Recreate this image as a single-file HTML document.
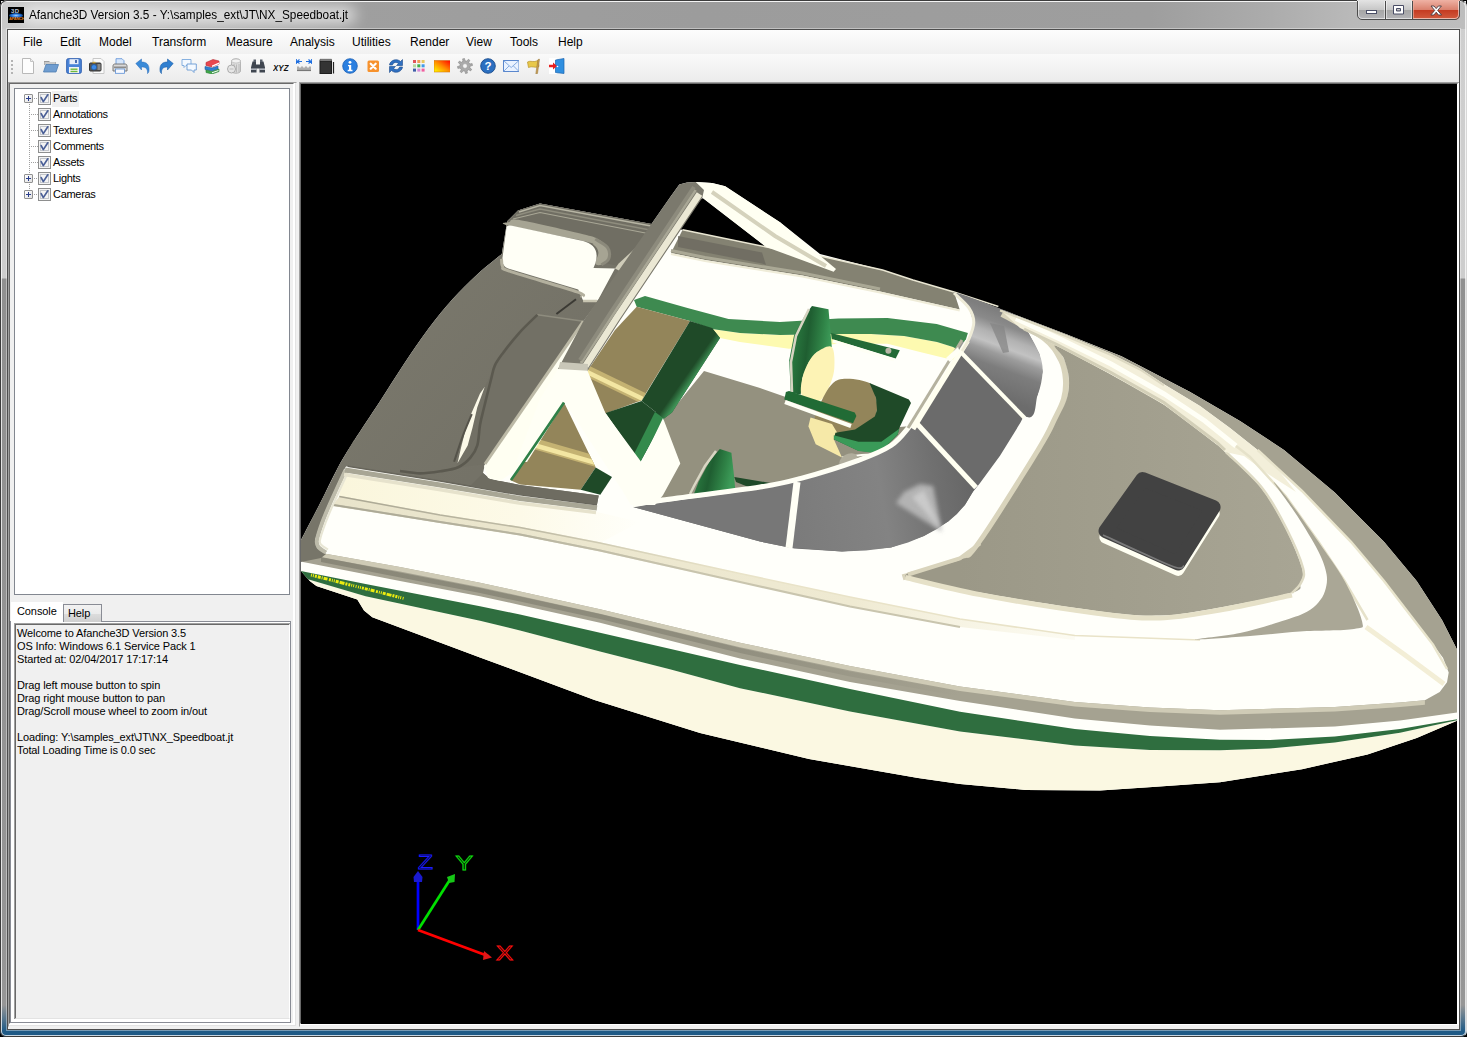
<!DOCTYPE html>
<html><head><meta charset="utf-8"><title>Afanche3D Version 3.5</title>
<style>
*{box-sizing:border-box;margin:0;padding:0}
html,body{width:1467px;height:1037px;overflow:hidden;background:#000}
body{position:relative;font-family:"Liberation Sans",sans-serif;font-size:12px;color:#000}
.abs{position:absolute}
#frame{left:0;top:0;width:1467px;height:1037px;border-radius:7px 7px 6px 6px;overflow:hidden;
 background:linear-gradient(180deg,#cfcfcf 0,#cdcdcd 278px,#909090 279px,#969696 1005px,#1f5a86 1031px,#1f5a86 1037px)}
#frameedge{left:0;top:0;width:1467px;height:1037px;border-radius:7px 7px 6px 6px;border:1px solid #3c3c3c;border-right-color:#d8d8d8}
#frameedge2{left:1px;top:1px;width:1465px;height:1035px;border-radius:6px 6px 5px 5px;border:1px solid rgba(255,255,255,.75);border-top-color:transparent}
#titlebar{left:1px;top:1px;width:1465px;height:28px;
 background:linear-gradient(90deg,#cacaca 0,#bdbdbd 120px,#9f9f9f 350px,#9c9c9c 700px,#9e9e9e 1150px,#acacac 1270px,#b9b9b9 1350px,#bdbdbd 1465px);border-top:1px solid #f4f4f4}
#titleshade{left:1px;top:20px;width:1465px;height:9px;background:linear-gradient(180deg,rgba(255,255,255,0),rgba(255,255,255,.18))}
#titleglow{left:22px;top:6px;width:334px;height:18px;border-radius:9px;background:rgba(255,255,255,.62);filter:blur(7px)}
#title{left:29px;top:8px;font-size:12px;white-space:nowrap;transform-origin:0 0;transform:scaleX(.981)}
#appicon{left:8px;top:7px;width:16px;height:16px;background:#000;overflow:hidden}
#clientedge{left:7px;top:29px;width:1453px;height:1001px;border:1px solid #4e4e4e;background:#fff;box-shadow:0 0 0 1px rgba(255,255,255,.38)}
#client{left:8px;top:30px;width:1451px;height:999px;background:#f0f0f0;overflow:hidden}
#menubar{left:0;top:0;width:1451px;height:24px;background:linear-gradient(180deg,#fdfdfd,#f1f1f1)}
.mi{top:5px;white-space:nowrap;transform-origin:0 0;font-size:12px;line-height:14px}
#toolbar{left:0;top:24px;width:1451px;height:28px;background:linear-gradient(180deg,#fafafa,#ececec)}
.ti{top:4px;width:16px;height:16px}

#lpanel{left:0;top:52px;width:287px;height:943px;background:#f0f0f0;border-style:solid;border-width:2px;border-color:#696969 #fff #fff #696969;box-shadow:inset 0 0 0 0 #000}
#lpanel:before{content:"";position:absolute;left:-2px;top:-2px;width:287px;height:943px;border-style:solid;border-width:1px;border-color:#a0a0a0 transparent transparent #a0a0a0;pointer-events:none}
#lpanel:after{content:"";position:absolute;left:-1px;top:-1px;width:285px;height:941px;border-style:solid;border-width:1px;border-color:transparent #e3e3e3 #e3e3e3 transparent;pointer-events:none}
#tree{left:4px;top:4px;width:276px;height:507px;border:1px solid #828790;background:#fff;font-size:11px}
.row{left:0;width:270px;height:16px}
.plus{left:9px;top:3px;width:9px;height:9px;border:1px solid #919191;background:linear-gradient(135deg,#fff,#e0e0e0);border-radius:1px}
.ph{left:1px;top:3px;width:5px;height:1px;background:#2b3f8c}
.pv{left:3px;top:1px;width:1px;height:5px;background:#2b3f8c}
.dot{top:7px;height:1px;background:repeating-linear-gradient(90deg,#a0a0a0 0 1px,transparent 1px 2px)}
.vdot{left:14px;top:15px;width:1px;height:92px;background:repeating-linear-gradient(180deg,#a0a0a0 0 1px,transparent 1px 2px)}
.cb{left:23px;top:1px;width:13px;height:13px;border:1px solid #8e8f8f;background:#f4f4f4;box-shadow:inset 0 0 0 1px #f4f4f4, inset 0 0 0 2px #c3c6cb}
.cb svg{left:0;top:0}
.tl{left:37px;top:0;height:16px;line-height:15px;padding:0 1px;white-space:nowrap;letter-spacing:-0.3px}
.tl.sel{background:#f0f0f0;padding-right:2px}
#tabpage{left:0;top:537px;width:281px;height:402px;border:1px solid #898c95;background:#fff}
#tab1{left:1px;top:518px;width:52px;height:21px;background:#fff;font-size:11px;line-height:18px;padding-left:6px;letter-spacing:-0.1px}
#tab2{left:53px;top:520px;width:39px;height:18px;border:1px solid #898c95;border-bottom:none;background:linear-gradient(180deg,#f2f2f2 0,#ebebeb 50%,#dddddd 51%,#cfcfcf 100%);font-size:11px;line-height:16px;padding-left:4px;letter-spacing:-0.1px}
#console{left:4px;top:539px;width:276px;height:396px;border-style:solid;border-width:2px 1px 1px 2px;border-color:#696969 #fff #e3e3e3 #696969;background:#f0f0f0;font-size:11px}
#console:before{content:"";position:absolute;left:-2px;top:-2px;width:274px;height:394px;border-style:solid;border-width:1px;border-color:#a0a0a0 transparent transparent #a0a0a0}
#ctext{position:absolute;left:1px;top:2px;line-height:13px;white-space:nowrap;letter-spacing:-0.12px}
#vpedge{left:291px;top:52px;width:1160px;height:943px;background:#000;border-style:solid;border-width:2px 2px 2px 2px;border-color:#696969 #fff #fff #696969}
#vpedge:before{content:"";position:absolute;left:-2px;top:-2px;width:1160px;height:943px;border-style:solid;border-width:1px;border-color:#a0a0a0 transparent transparent #a0a0a0}
</style></head><body>
<div id="frame" class="abs"></div>
<div id="titlebar" class="abs"></div>
<div id="titleglow" class="abs"></div>
<div id="frameedge" class="abs"></div><div id="frameedge2" class="abs"></div>
<div id="appicon" class="abs"><i class="abs" style="left:1px;top:6px;width:14px;height:5px;border-radius:50%;background:radial-gradient(ellipse at center,#9fd0ff 0,#1f6fd8 45%,rgba(10,30,90,0) 100%)"></i><b class="abs" style="left:3px;top:1px;font-size:6px;line-height:6px;color:#b9c6dc;font-weight:bold;letter-spacing:.3px">3D</b><b class="abs" style="left:1px;top:10px;font-size:4px;line-height:4px;color:#e8801c;font-weight:bold;letter-spacing:-.2px">AFANCHE</b></div>
<div id="title" class="abs">Afanche3D Version 3.5 - Y:\samples_ext\JT\NX_Speedboat.jt</div>
<svg class="abs" style="left:1354px;top:0" width="110" height="24" viewBox="1354 0 110 24">
<defs>
<linearGradient id="wbG" x1="0" y1="0" x2="0" y2="1"><stop offset="0" stop-color="#e4e4e4"/><stop offset=".48" stop-color="#c6c6c6"/><stop offset=".5" stop-color="#a6a6a6"/><stop offset="1" stop-color="#b8b8bc"/></linearGradient>
<linearGradient id="wbR" x1="0" y1="0" x2="0" y2="1"><stop offset="0" stop-color="#efb2a4"/><stop offset=".48" stop-color="#d97f6c"/><stop offset=".5" stop-color="#c53c22"/><stop offset=".85" stop-color="#d0563a"/><stop offset="1" stop-color="#e08c6a"/></linearGradient>
<clipPath id="wbC"><path d="M1357 0h103v15a5 5 0 0 1-5 5h-93a5 5 0 0 1-5-5z"/></clipPath>
</defs>
<g clip-path="url(#wbC)">
<rect x="1357" y="0" width="55" height="21" fill="url(#wbG)"/>
<rect x="1412" y="0" width="48" height="21" fill="url(#wbR)"/>
</g>
<path d="M1357.500 1v14a4.500 4.500 0 0 0 4.500 4.500h93a4.500 4.500 0 0 0 4.500-4.500V1" fill="none" stroke="#4b4b4b" stroke-width="1"/>
<path d="M1358.500 1v14a3.500 3.500 0 0 0 3.500 3.500h93a3.500 3.500 0 0 0 3.500-3.500V1" fill="none" stroke="#fff" stroke-opacity=".55" stroke-width="1"/>
<path d="M1385.500 1v19M1412.500 1v19" stroke="#4b4b4b" stroke-width="1"/>
<path d="M1386.500 1v18M1384.500 1v18M1411.500 1v18" stroke="#fff" stroke-opacity=".5" stroke-width="1"/>
<path d="M1413.500 1v18" stroke="#f0b0a0" stroke-opacity=".6" stroke-width="1"/>
<rect x="1366.500" y="10.500" width="10" height="3" fill="#fff" stroke="#4a4e66" stroke-width="1"/>
<path d="M1393.500 5.500h10v8.500h-10zM1396.500 8.500h4v2.500h-4z" fill="#fff" fill-rule="evenodd" stroke="#4a4e66" stroke-width="1"/>
<path d="M1431 5.500h3l2.200 2.600 2.200-2.600h3l-3.700 4.400 3.900 4.600h-3.100l-2.300-2.800-2.300 2.800h-3.100l3.900-4.600z" fill="#fff" stroke="#4a3a40" stroke-width=".9" transform="translate(0 .5)"/>
</svg>

<div id="clientedge" class="abs"></div>
<div id="client" class="abs">
<div id="menubar" class="abs">
<span class="mi abs" style="left:15px">File</span>
<span class="mi abs" style="left:52px">Edit</span>
<span class="mi abs" style="left:91px">Model</span>
<span class="mi abs" style="left:144px">Transform</span>
<span class="mi abs" style="left:218px">Measure</span>
<span class="mi abs" style="left:282px">Analysis</span>
<span class="mi abs" style="left:344px">Utilities</span>
<span class="mi abs" style="left:402px">Render</span>
<span class="mi abs" style="left:458px">View</span>
<span class="mi abs" style="left:502px">Tools</span>
<span class="mi abs" style="left:550px">Help</span>
</div>
<div id="toolbar" class="abs">
<i class="abs" style="left:3px;top:6px;width:2px;height:15px;background:repeating-linear-gradient(180deg,#b4b4b4 0 2px,transparent 2px 4px)"></i><svg class="abs ti" style="left:12px" viewBox="0 0 16 16"><path d="M2.5 .5h8l3 3v12h-11z" fill="#fdfdfd" stroke="#b9b9b9"/><path d="M10.5 .5v3h3" fill="#eee" stroke="#c4c4c4"/></svg><svg class="abs ti" style="left:35px" viewBox="0 0 16 16"><path d="M1 3h5l1 1h6v3H1z" fill="#9a9a9a"/><path d="M1.5 4h11v3h-11z" fill="#c9c9c9"/><path d="M.5 14L3 6.5h12.5L13 14z" fill="#6f9dd0" stroke="#4e7db3" stroke-width=".8"/></svg><svg class="abs ti" style="left:58px" viewBox="0 0 16 16"><rect x=".7" y=".7" width="14.6" height="14.6" rx="1.5" fill="#4a84d8" stroke="#2f5fb0"/><rect x="3.5" y="1.2" width="9" height="5" fill="#e9eef8"/><rect x="9" y="2" width="2" height="3" fill="#4a6fb0"/><rect x="3" y="9" width="10" height="6" fill="#f4f4f4"/><rect x="4.5" y="10.5" width="7" height="1.4" fill="#6fba3c"/><rect x="4.5" y="12.8" width="7" height="1.4" fill="#6fba3c"/></svg><svg class="abs ti" style="left:81px" viewBox="0 0 16 16"><path d="M4 .5h8l3 3v12H4z" fill="#fbfbfb" stroke="#c8c8c8"/><rect x=".5" y="5" width="11.5" height="8" rx="1" fill="#555" stroke="#333"/><circle cx="5" cy="9.2" r="2.7" fill="#3c8ae8" stroke="#245a9c" stroke-width=".8"/><rect x="8.5" y="6" width="3" height="6" fill="#8a8a8a"/><rect x="3.5" y="3.8" width="3" height="1.5" fill="#c9a23a"/></svg><svg class="abs ti" style="left:104px" viewBox="0 0 16 16"><path d="M4 .7h6l2 2v5H4z" fill="#d6e6fb" stroke="#5b8fd6" stroke-width=".8"/><path d="M1 8c0-1.5 1-2 2-2h10c1 0 2 .5 2 2v5H1z" fill="#d9d9d9" stroke="#6e6e6e" stroke-width=".9"/><rect x="3.5" y="11" width="9" height="4.3" fill="#f6f9ff" stroke="#5b8fd6" stroke-width=".8"/><rect x="2" y="8.5" width="12" height="1.6" fill="#8c8c8c"/></svg><svg class="abs ti" style="left:127px" viewBox="0 0 16 16"><path d="M.8 5.5L6.5 1v3c5 0 8 2.500 7.500 8.500 0 1.500-1 3-1.500 3 .5-4-1.500-7-6-6.500v3z" fill="#3a8ad8" stroke="#2a6ab8" stroke-width=".5"/></svg><svg class="abs ti" style="left:150px" viewBox="0 0 16 16"><path d="M15.200 5.500L9.500 1v3c-5 0-8 2.500-7.500 8.500 0 1.500 1 3 1.500 3-.5-4 1.500-7 6-6.500v3z" fill="#2f7fd0" stroke="#1f5fa8" stroke-width=".6"/></svg><svg class="abs ti" style="left:173px" viewBox="0 0 16 16"><path d="M1 1.500h9v6H5l-2 2v-2H1z" fill="#f4f9ff" stroke="#7aa8dc" stroke-width=".9"/><path d="M6 6h9.300v6H13v2.500L10.500 12H6z" fill="#f4f9ff" stroke="#6a9ad4" stroke-width=".9"/></svg><svg class="abs ti" style="left:196px" viewBox="0 0 16 16"><path d="M2 4.500L9 1.500l6 1.500v3L8 9 2 7.500z" fill="#e8474f" stroke="#b52a32" stroke-width=".6"/><path d="M8 9l7-3v-1.500L8 7.500z" fill="#fff"/><path d="M1 8.500l7 1.500 6-2v3L8 13 1 11.500z" fill="#2f7fd0" stroke="#1f5a9c" stroke-width=".6"/><path d="M2 12l6 1.500 7-2.500v2.500L8 16l-6-1.500z" fill="#3faa4a" stroke="#2a7a34" stroke-width=".6"/><path d="M8 14.300l6.500-2.300v1L8 15.300z" fill="#fff"/></svg><svg class="abs ti" style="left:219px" viewBox="0 0 16 16"><path d="M4.500 3c0-3 9-3 9 0v10c0 3-9 3-9 0z" fill="#dcdcdc" stroke="#a8a8a8" stroke-width=".8"/><ellipse cx="9" cy="3" rx="4.500" ry="2" fill="#f2f2f2" stroke="#b0b0b0" stroke-width=".6"/><path d="M7 6v8M9.500 6.500v8M12 6v8" stroke="#b4b4b4" stroke-width=".9"/><circle cx="4.500" cy="11" r="4" fill="#e6e6e6" stroke="#9c9c9c" stroke-width=".8"/><path d="M2.500 11h4" stroke="#bbb"/></svg><svg class="abs ti" style="left:242px" viewBox="0 0 16 16"><path d="M2.500 3.500h3.500v3h4v-3h3.500l1.500 6v5h-5.500v-4h-3v4H1v-5z" fill="#3f4650"/><rect x="3.500" y="1.500" width="2.500" height="2.500" fill="#59616c"/><rect x="10" y="1.500" width="2.500" height="2.500" fill="#59616c"/><rect x="1" y="10.500" width="5.500" height="1.300" fill="#c9ced6"/><rect x="9.500" y="10.500" width="5.500" height="1.300" fill="#c9ced6"/></svg><svg class="abs ti" style="left:265px" viewBox="0 0 16 16"><text x="0" y="12.500" font-family="Liberation Sans,sans-serif" font-size="9.500" font-weight="bold" font-style="italic" fill="#111" textLength="15.500" lengthAdjust="spacingAndGlyphs">XYZ</text></svg><svg class="abs ti" style="left:288px" viewBox="0 0 16 16"><path d="M1 3.500h5M10 3.500h5M.300 1v5M15.700 1v5M3.500 1.500L1 3.500l2.500 2M12.500 1.500l2.500 2-2.500 2" fill="none" stroke="#1f6fe0" stroke-width="1.100"/><path d="M1 12.500h14" stroke="#777" stroke-width="1.200"/><path d="M2 8.500v3.500M4 9.500v2.500M6 8.500v3.500M8 9.500v2.500M10 8.500v3.500M12 9.500v2.500M14 8.500v3.500" stroke="#666" stroke-width="1"/></svg><svg class="abs ti" style="left:311px" viewBox="0 0 16 16"><rect x="1" y="3" width="11.500" height="12.500" fill="#333" stroke="#1d1d1d"/><path d="M1 3V1.300h11.500V3" fill="#777" stroke="#555" stroke-width=".7"/><path d="M14.500 4v11.500" stroke="#222" stroke-width="1.200"/></svg><svg class="abs ti" style="left:334px" viewBox="0 0 16 16"><circle cx="8" cy="8" r="7.300" fill="#2a7fe0" stroke="#1c5fb4" stroke-width=".8"/><circle cx="8" cy="4.300" r="1.400" fill="#fff"/><path d="M6 7h3.200v4.800h1.300v1.400H5.700v-1.400H7V8.300H6z" fill="#fff"/></svg><svg class="abs ti" style="left:357px" viewBox="0 0 16 16"><rect x="2.500" y="2.500" width="11.500" height="11.500" rx="1.500" fill="#f7922d"/><path d="M5.700 5.700l5 5M10.700 5.700l-5 5" stroke="#fff" stroke-width="2.200" stroke-linecap="round"/></svg><svg class="abs ti" style="left:380px" viewBox="0 0 16 16"><path d="M1.500 7C2 2 9 0 12.500 3.500L14.500 1.500v6H8.500l2-2C8 3.500 5 4.500 4.500 7z" fill="#2f6fc0" stroke="#1b4a8c" stroke-width=".6"/><path d="M14.500 9C14 14 7 16 3.500 12.500L1.500 14.500v-6h6l-2 2C8 12.500 11 11.500 11.500 9z" fill="#2f6fc0" stroke="#1b4a8c" stroke-width=".6"/></svg><svg class="abs ti" style="left:403px" viewBox="0 0 16 16"><rect x="2.0" y="2.0" width="3" height="3" fill="#e0525a"/><rect x="6.3" y="2.0" width="3" height="3" fill="#f09a55"/><rect x="10.6" y="2.0" width="3" height="3" fill="#e8c860"/><rect x="2.0" y="6.3" width="3" height="3" fill="#b8d8a0"/><rect x="6.3" y="6.3" width="3" height="3" fill="#3fae4a"/><rect x="10.6" y="6.3" width="3" height="3" fill="#3f9ae8"/><rect x="2.0" y="10.6" width="3" height="3" fill="#3f5fa8"/><rect x="6.3" y="10.6" width="3" height="3" fill="#d88ad8"/><rect x="10.6" y="10.6" width="3" height="3" fill="#f060a0"/></svg><svg class="abs ti" style="left:426px" viewBox="0 0 16 16"><defs><linearGradient id="tg" x1="0" y1="1" x2="1" y2="0"><stop offset="0" stop-color="#ffff00"/><stop offset=".5" stop-color="#ff8c00"/><stop offset="1" stop-color="#ff0000"/></linearGradient></defs><rect x="0" y="2.500" width="16.500" height="11.500" fill="url(#tg)" stroke="#c86400" stroke-width=".5"/></svg><svg class="abs ti" style="left:449px" viewBox="0 0 16 16"><polygon points="15.1,5.6 15.5,7.5 13.2,8.0 12.8,10.0 14.7,11.3 13.6,12.9 11.7,11.7 10.0,12.8 10.4,15.1 8.5,15.5 8.0,13.2 6.0,12.8 4.7,14.7 3.1,13.6 4.3,11.7 3.2,10.0 0.9,10.4 0.5,8.5 2.8,8.0 3.2,6.0 1.3,4.7 2.4,3.1 4.3,4.3 6.0,3.2 5.6,0.9 7.5,0.5 8.0,2.8 10.0,3.2 11.3,1.3 12.9,2.4 11.7,4.3 12.8,6.0" fill="#aaa" stroke="#888" stroke-width=".6"/><circle cx="8" cy="8" r="2.400" fill="#f4f4f4" stroke="#999" stroke-width=".6"/></svg><svg class="abs ti" style="left:472px" viewBox="0 0 16 16"><circle cx="8" cy="8" r="7.300" fill="#2b6fc0" stroke="#1b4c8c" stroke-width=".9"/><text x="8" y="12.300" text-anchor="middle" font-family="Liberation Sans,sans-serif" font-size="11.500" font-weight="bold" fill="#fff">?</text></svg><svg class="abs ti" style="left:495px" viewBox="0 0 16 16"><rect x=".500" y="2.500" width="15.500" height="11" fill="#e9f2ff" stroke="#4a7cc8" stroke-width=".9"/><path d="M.500 2.500l7.700 7 7.800-7M.500 13.500l5.500-5.500M16 13.500l-5.500-5.500" fill="none" stroke="#7aa4dc" stroke-width=".9"/></svg><svg class="abs ti" style="left:518px" viewBox="0 0 16 16"><path d="M1.500 4c3-2 6 1 10.500-1.500L13 8.500c-4 2-7-1-10.500 1z" fill="#e8c84a" stroke="#b8922a" stroke-width=".7"/><path d="M12 1.500l1.500-.300L11.500 15.500l-1.700.200z" fill="#c9a05a" stroke="#94702c" stroke-width=".5"/></svg><svg class="abs ti" style="left:541px" viewBox="0 0 16 16"><rect x="0" y="0" width="8" height="16" fill="#fff"/><path d="M6.500 2L15 .500v15L6.500 14.500z" fill="#2f8fe0" stroke="#1b64b0" stroke-width=".7"/><path d="M0 6.700h4V4.500L8 8l-4 3.500V9.300H0z" fill="#e82020"/><circle cx="8.500" cy="8.500" r=".800" fill="#fff"/></svg>
</div>

<div id="lpanel" class="abs">
 <div id="tree" class="abs">
  <i class="abs vdot"></i>
  <div class="abs row" style="top:2px"><i class="abs plus"><b class="abs ph"></b><b class="abs pv"></b></i><i class="abs dot" style="left:19px;width:4px"></i><i class="abs cb"><svg class="abs" style="left:0;top:0" width="11" height="11" viewBox="0 0 11 11"><path d="M2.2 4.6 L4.3 8.6 L8.8 1.8" fill="none" stroke="#4a5f97" stroke-width="1.7" stroke-linecap="round" stroke-linejoin="round"/></svg></i><span class="abs tl sel">Parts</span></div>
  <div class="abs row" style="top:18px"><i class="abs dot" style="left:14px;width:9px"></i><i class="abs cb"><svg class="abs" style="left:0;top:0" width="11" height="11" viewBox="0 0 11 11"><path d="M2.2 4.6 L4.3 8.6 L8.8 1.8" fill="none" stroke="#4a5f97" stroke-width="1.7" stroke-linecap="round" stroke-linejoin="round"/></svg></i><span class="abs tl">Annotations</span></div>
  <div class="abs row" style="top:34px"><i class="abs dot" style="left:14px;width:9px"></i><i class="abs cb"><svg class="abs" style="left:0;top:0" width="11" height="11" viewBox="0 0 11 11"><path d="M2.2 4.6 L4.3 8.6 L8.8 1.8" fill="none" stroke="#4a5f97" stroke-width="1.7" stroke-linecap="round" stroke-linejoin="round"/></svg></i><span class="abs tl">Textures</span></div>
  <div class="abs row" style="top:50px"><i class="abs dot" style="left:14px;width:9px"></i><i class="abs cb"><svg class="abs" style="left:0;top:0" width="11" height="11" viewBox="0 0 11 11"><path d="M2.2 4.6 L4.3 8.6 L8.8 1.8" fill="none" stroke="#4a5f97" stroke-width="1.7" stroke-linecap="round" stroke-linejoin="round"/></svg></i><span class="abs tl">Comments</span></div>
  <div class="abs row" style="top:66px"><i class="abs dot" style="left:14px;width:9px"></i><i class="abs cb"><svg class="abs" style="left:0;top:0" width="11" height="11" viewBox="0 0 11 11"><path d="M2.2 4.6 L4.3 8.6 L8.8 1.8" fill="none" stroke="#4a5f97" stroke-width="1.7" stroke-linecap="round" stroke-linejoin="round"/></svg></i><span class="abs tl">Assets</span></div>
  <div class="abs row" style="top:82px"><i class="abs plus"><b class="abs ph"></b><b class="abs pv"></b></i><i class="abs dot" style="left:19px;width:4px"></i><i class="abs cb"><svg class="abs" style="left:0;top:0" width="11" height="11" viewBox="0 0 11 11"><path d="M2.2 4.6 L4.3 8.6 L8.8 1.8" fill="none" stroke="#4a5f97" stroke-width="1.7" stroke-linecap="round" stroke-linejoin="round"/></svg></i><span class="abs tl">Lights</span></div>
  <div class="abs row" style="top:98px"><i class="abs plus"><b class="abs ph"></b><b class="abs pv"></b></i><i class="abs dot" style="left:19px;width:4px"></i><i class="abs cb"><svg class="abs" style="left:0;top:0" width="11" height="11" viewBox="0 0 11 11"><path d="M2.2 4.6 L4.3 8.6 L8.8 1.8" fill="none" stroke="#4a5f97" stroke-width="1.7" stroke-linecap="round" stroke-linejoin="round"/></svg></i><span class="abs tl">Cameras</span></div>
 </div>
 <div id="tabline" class="abs"></div>
 <div id="tabpage" class="abs"></div>
 <div id="tab1" class="abs">Console</div>
 <div id="tab2" class="abs"><span>Help</span></div>
 <div id="console" class="abs"><div id="ctext">Welcome to Afanche3D Version 3.5<br>OS Info: Windows 6.1 Service Pack 1<br>Started at: 02/04/2017 17:17:14<br><br>Drag left mouse button to spin<br>Drag right mouse button to pan<br>Drag/Scroll mouse wheel to zoom in/out<br><br>Loading: Y:\samples_ext\JT\NX_Speedboat.jt<br>Total Loading Time is 0.0 sec</div></div>
</div>
<div id="vpedge" class="abs"></div>

<svg class="abs" id="vp" style="left:293px;top:54px" width="1156" height="940" viewBox="301 84 1156 940"><defs>
<linearGradient id="gCream" gradientUnits="userSpaceOnUse" x1="400" y1="0" x2="1457" y2="0"><stop offset="0" stop-color="#f9f5de"/><stop offset=".35" stop-color="#fdfbe6"/><stop offset=".7" stop-color="#fcf9e3"/><stop offset="1" stop-color="#ece6cd"/></linearGradient>
<linearGradient id="gRail" gradientUnits="userSpaceOnUse" x1="300" y1="0" x2="1457" y2="0"><stop offset="0" stop-color="#9a9786"/><stop offset=".5" stop-color="#9f9c8b"/><stop offset="1" stop-color="#aaa796"/></linearGradient>
<linearGradient id="gDeck" gradientUnits="userSpaceOnUse" x1="380" y1="300" x2="520" y2="420"><stop offset="0" stop-color="#7a786c"/><stop offset="1" stop-color="#747267"/></linearGradient>
<linearGradient id="gFore" gradientUnits="userSpaceOnUse" x1="960" y1="500" x2="1300" y2="500"><stop offset="0" stop-color="#9b9887"/><stop offset="1" stop-color="#a8a594"/></linearGradient>
<linearGradient id="gGlassTop" gradientUnits="userSpaceOnUse" x1="1012" y1="316" x2="984" y2="392"><stop offset="0" stop-color="#7e7e7e"/><stop offset=".14" stop-color="#8a8a8a"/><stop offset=".28" stop-color="#b2b2b2"/><stop offset=".4" stop-color="#c2c2c2"/><stop offset=".5" stop-color="#9c9c9c"/><stop offset=".66" stop-color="#7d7d7d"/><stop offset="1" stop-color="#6c6c6c"/></linearGradient>
<linearGradient id="gGlassSide" gradientUnits="userSpaceOnUse" x1="790" y1="500" x2="970" y2="470"><stop offset="0" stop-color="#7b7b7b"/><stop offset=".5" stop-color="#838383"/><stop offset=".8" stop-color="#707070"/><stop offset="1" stop-color="#666"/></linearGradient>
<linearGradient id="gSeatEdge" gradientUnits="userSpaceOnUse" x1="690" y1="370" x2="700" y2="377"><stop offset="0" stop-color="#1f4a28"/><stop offset=".6" stop-color="#3a8a50"/><stop offset="1" stop-color="#4aa865"/></linearGradient>
<linearGradient id="gCore" gradientUnits="userSpaceOnUse" x1="321" y1="0" x2="960" y2="0"><stop offset="0" stop-color="#858374" stop-opacity=".85"/><stop offset=".6" stop-color="#858374" stop-opacity=".7"/><stop offset="1" stop-color="#858374" stop-opacity="0"/></linearGradient>
<linearGradient id="gCrease" gradientUnits="userSpaceOnUse" x1="340" y1="0" x2="1075" y2="0"><stop offset="0" stop-color="#e9e4cb"/><stop offset=".7" stop-color="#efead2"/><stop offset="1" stop-color="#f6f2de" stop-opacity=".3"/></linearGradient>
<linearGradient id="gSeatBack" x1="0" y1="0" x2="1" y2=".25"><stop offset="0" stop-color="#3a9656"/><stop offset=".18" stop-color="#2a7a40"/><stop offset=".5" stop-color="#1f5e31"/><stop offset=".8" stop-color="#2f8246"/><stop offset="1" stop-color="#3c9a58"/></linearGradient>
<linearGradient id="gTint" gradientUnits="userSpaceOnUse" x1="340" y1="0" x2="640" y2="0"><stop offset="0" stop-color="#faf6dc"/><stop offset=".6" stop-color="#fdfae8"/><stop offset="1" stop-color="#fffffa"/></linearGradient>
<linearGradient id="gCrLine" gradientUnits="userSpaceOnUse" x1="335" y1="0" x2="740" y2="0"><stop offset="0" stop-color="#a9a693"/><stop offset=".5" stop-color="#b5b29e" stop-opacity=".8"/><stop offset="1" stop-color="#c9c5ae" stop-opacity="0"/></linearGradient>
<filter id="blur2"><feGaussianBlur stdDeviation="2.2"/></filter>
<filter id="blur3"><feGaussianBlur stdDeviation="4"/></filter>
</defs><rect x="301" y="84" width="1156" height="940" fill="#000"/><path d="M518,210.5 L540,203.5 L600,214.5 L651.5,224 L671,196 L679.3,184.6 L687,182.5 L695.7,182 L712,183 L725.2,186.2 L780,222.3 L820,254 L882.6,270 L913,280 L954,292 L1000,309 L1067,334.5 L1121.5,356.3 L1189.7,391.8 L1240,421 L1284,450 L1334.8,492.6 L1384,541.8 L1416.7,581 L1442,620 L1457,649.5 L1457,720.8 L1416.7,738 L1367.5,754.4 L1302,769.2 L1220,782.3 L1148.8,787.3 L1100,790.5 L1025.6,790 L960,783.9 L918,778 L809,759 L700,733 L594.5,700 L480,657.4 L372.3,617.3 L364,610.4 L357.3,599.5 L316.4,585.9 L309.8,581 L301,571 L301 540 C304.1 534.0 313.6 516.0 319.7 504 C325.8 492.0 331.9 478.6 337.7 467.9 C343.5 457.2 347.6 450.9 354.5 440 C361.4 429.1 370.8 415.3 379 402.7 C387.2 390.1 395.4 376.8 403.6 364.5 C411.8 352.2 420.0 339.9 428.2 329 C436.4 318.1 444.5 308.1 452.7 299 C460.9 289.9 469.0 282.0 477.2 274.5 C485.4 267.0 497.7 257.4 501.8 254 L507.2,221.3Z" fill="#fffffa"/>
<polygon points="703,198 767,247.5 682.6,229.7 660,226" fill="#000" />
<polygon points="301,571 308,579.3 365.6,596.2 480,620.8 520,630.5 600,651.6 670.8,669.5 740,688.2 850,711.5 960,731.5 1074.8,745.4 1150,750 1220,750.3 1270,748.5 1334.8,742.5 1400,732.8 1457,720.3 1457,720.8 1416.7,738 1367.5,754.4 1302,769.2 1220,782.3 1148.8,787.3 1100,790.5 1025.6,790 960,783.9 918,778 809,759 700,733 594.5,700 480,657.4 372.3,617.3 364,610.4 357.3,599.5 316.4,585.9 309.8,581 301,571" fill="#fbf8e2" fill="url(#gCream)"/>
<polygon points="301,571 305.7,572 365.6,584 480,606.3 520,614.5 600,632.8 670.8,649 740,665 850,689 960,711.8 1074.8,729 1150,736 1220,739.7 1270,740 1334.8,736.4 1400,729 1457,719.2 1457,720.3 1400,732.8 1334.8,742.5 1270,748.5 1220,750.3 1150,750 1074.8,745.4 960,731.5 850,711.5 740,688.2 670.8,669.5 600,651.6 520,630.5 480,620.8 365.6,596.2 308,579.3 301,571" fill="#2f6e3f" />
<polyline points="311,575 404,598.5" fill="none" stroke="#ecec10" stroke-width="3" stroke-dasharray="1 1 1 1 2 1 3 1 1 1 4 1.5 2 1 1 1 1 1 3 1 5 1 2 1 2 1 1 1 1 1.5 1 1.5"/>
<polygon points="303,548 321.3,553 400,567 480,582.7 520,591.5 600,609.2 740,642.8 850,666 960,686.4 1074.8,702 1150,707.5 1220,710.2 1334.8,706.9 1400,702.5 1424.9,700.3 1439.7,692.1 1447,682.3 1448.7,672.5 1443,657.7 1433,644.6 1414,620 1384,581 1351,541.8 1302,491 1257.7,450 1230,428 1200,406 1164,384.3 1140,368.5 1110,353.5 1067,335.5 1000,309.5 1000,309 1067,334.5 1121.5,356.3 1189.7,391.8 1240,421 1284,450 1334.8,492.6 1384,541.8 1416.7,581 1442,620 1457,649.5 1457,712.6 1400,720.5 1334.8,726.6 1220,729.8 1150,725.5 1074.8,718.4 960,701.1 850,682 740,658.4 600,622.7 520,605 480,596.2 400,581 303,562 301,560" fill="#a5a291" fill="url(#gRail)"/>
<polygon points="303,548 321.3,553 400,567 480,582.7 520,591.5 600,609.2 740,642.8 850,666 960,686.4 1074.8,702 1150,707.5 1220,710.2 1334.8,706.9 1400,702.5 1424.9,700.3 1424.9,704.8 1400,707 1334.8,711.4 1220,714.7 1150,712 1074.8,706.5 960,690.9 850,670.5 740,647.3 600,613.7 520,596 480,587.2 400,571.5 321.3,557.5 303,552.5" fill="#cfcbb6" />
<polygon points="321,557 400,572.5 480,588 520,596.5 600,614 740,648 850,671.5 960,691.5 960,696.5 850,676.5 740,653 600,619 520,601.5 480,593 400,577.5 321,562" fill="url(#gCore)" />
<polygon points="343,474 440,489 520,502 597,512 640,522 600,543 520,527.5 440,515 339.3,496.6" fill="url(#gTint)" />
<polygon points="339.3,496.6 440,515 520,527.5 600,543 740,573.5 850,597 960,619 1074.8,635.5 1074.8,640 960,627 850,606.5 740,582 600,550.5 520,534.5 440,522 332.8,504.8" fill="url(#gCrease)" />
<polyline points="332.8,504.8 440,522 520,534.5 600,550.5 740,582 850,606.5 960,627" fill="none" stroke="#c9c5ae" stroke-width="2.2" />
<polyline points="339.3,496.6 440,515 520,527.5 600,543 740,573.5 850,597 960,619 1074.8,635.5 1200,640" fill="none" stroke="#e9e3c8" stroke-width="1.6" />
<polyline points="339.3,496.6 440,515 520,527.5 600,543 740,573.5" fill="none" stroke="url(#gCrLine)" stroke-width="1.5" />
<polyline points="332.8,504.8 440,522 520,534.5 600,550.5 740,582" fill="none" stroke="url(#gCrLine)" stroke-width="1.8" />
<polygon points="354,440 337.7,467.9 319.7,504 301,540 301,560 301,562 321,558 326,554 317,548 315,540 321,522 328,505 344,470 357,445" fill="#777569" />
<path d="M345.5 470 C342.8 475.8 333.3 496.3 329.5 505 C325.7 513.7 324.6 516.2 322.5 522 C320.4 527.8 317.7 535.8 317 540 C316.3 544.2 317.0 544.9 318.5 547 C320.0 549.1 324.8 551.6 326 552.5" fill="none" stroke="#bdbbaa" stroke-width="4" />
<path d="M348.5 471 C345.8 476.8 336.3 497.3 332.5 506 C328.7 514.7 327.6 517.3 325.5 523 C323.4 528.7 320.7 536.3 320 540 C319.3 543.7 320.2 543.4 321.5 545 C322.8 546.6 326.9 548.8 328 549.5" fill="none" stroke="#e8e6d4" stroke-width="2" />
<path d="M337.7 467.9 C340.5 463.2 347.6 450.9 354.5 440 C361.4 429.1 370.8 415.3 379 402.7 C387.2 390.1 395.4 376.8 403.6 364.5 C411.8 352.2 420.0 339.9 428.2 329 C436.4 318.1 444.5 308.1 452.7 299 C460.9 289.9 469.0 282.0 477.2 274.5 C485.4 267.0 497.7 257.4 501.8 254 L507.2,221.3 L518,210.5 L540,203.5 L651.5,224 L640,246 L583.3,321.3 L485,464 L483,473 L490,479 L520,484.9 L598.7,495.6 L597,504.6 L520,494.8 L440,481 L347.5,466.2Z" fill="url(#gDeck)"/>
<polyline points="345,470 440,485 520,498.5 597,508" fill="none" stroke="#a8a695" stroke-width="5" />
<polyline points="344,474.5 439,489.5 519,503 596,512.5" fill="none" stroke="#e6e2cc" stroke-width="3.5" />
<polyline points="347.5,466.2 440,481 520,494.8 597,504.6" fill="none" stroke="#67655b" stroke-width="1.6" />
<polygon points="483,473 490,479 520,484.9 598.7,495.6 597,504.6 520,494.8 470,486" fill="#6e6c61" />
<polygon points="537.4,314.8 583.3,321.3 485,464 456,468 466,434 478.4,401.6 494.8,365.6 519.3,332.8" fill="#727065" />
<polyline points="583.3,321.3 537.4,314.8" fill="none" stroke="#8e8c7e" stroke-width="1.5" />
<path d="M537.4 314.8 C534.4 317.8 525.0 326.4 519.3 332.8 C513.6 339.2 507.1 347.5 503 353 C498.9 358.5 496.8 361.1 494.8 365.6 C492.8 370.1 492.7 373.1 490.9 380 C489.1 386.9 485.9 399.8 484.1 407.3 C482.3 414.8 481.1 418.6 480 425 C478.9 431.4 478.9 439.9 477.3 445.4 C475.7 450.8 473.6 454.0 470.4 457.7 C467.2 461.4 463.2 465.0 458.2 467.3 C453.2 469.6 446.8 470.3 440.4 471.3 C434.0 472.3 426.7 473.4 420 473.4 C413.3 473.3 403.3 471.4 400 471" fill="none" stroke="#5b594f" stroke-width="2.6" />
<polygon points="484.8,386.8 477.3,407.3 472.5,427.7 467.7,445.4 457.5,463.2 460.9,448.2 465,431.8 471.1,414.1 480,393.6" fill="#fbf9e8" />
<path d="M471.8 414.1 C470.2 418.0 465.2 429.4 462.3 437.3 C459.4 445.2 455.5 457.7 454.1 461.8" fill="none" stroke="#55534a" stroke-width="2" />
<polygon points="583.3,321.3 590,323 562,399 516,470 500,481 488,478 484,466" fill="#fffff2" />
<polyline points="583.3,321.3 485,464" fill="none" stroke="#bcb9a6" stroke-width="3" />
<polygon points="507,222 518,210.5 540,203.5 651.5,224 660,228 640,250 628,268 600,262 540,236 507,232" fill="#706e63" />
<polyline points="519,212 540,205.5 651,226" fill="none" stroke="#b7b5a4" stroke-width="1.5" />
<polyline points="516,215.5 540,209 650,230" fill="none" stroke="#8f8d7e" stroke-width="1.5" />
<polyline points="513,219 540,212.5 648,233.5" fill="none" stroke="#a9a796" stroke-width="1.2" />
<path d="M509.4 222.1 C511.4 221.2 508.2 218.2 520.5 220.2 C532.8 222.2 570.2 231.0 583.1 234.2 C596.0 237.3 593.7 236.8 597.8 239.1 C601.9 241.3 605.8 244.4 607.6 247.7 C609.4 251.0 609.8 255.8 608.8 258.7 C607.8 261.6 603.8 264.0 601.5 264.8 C599.2 265.6 595.8 265.6 595.3 263.6 C594.8 261.6 598.6 255.7 598.4 252.6 C598.2 249.5 596.6 247.1 594.1 245.2 C591.6 243.2 597.4 244.2 583.1 240.9 C568.8 237.6 520.8 228.7 508.5 225.6 C496.2 222.5 507.4 223.0 509.4 222.1Z" fill="#a6a493" />
<path d="M595.3 239.1 C597.3 240.5 605.4 244.4 607.6 247.7 C609.9 251.0 609.8 255.8 608.8 258.7 C607.8 261.6 602.7 263.8 601.5 264.8" fill="none" stroke="#8b897b" stroke-width="3" />
<path d="M506.4 228.0 Q506.4 224.4 511.9 225.8 L583.1 240.9 C594.1 244.0 600.9 251.3 593.5 267.9 L615.0 268.5 L597.8 300.4 L583.1 300.4 L578.2 289.4 L508.2 268.5 Q500.9 266.1 502.7 256.3 Z" fill="#fffff6"/>
<path d="M501.5 258.7 C501.7 260.0 501.2 264.5 502.7 266.7 C504.2 268.9 498.3 267.4 510.7 271.6 C523.1 275.8 565.0 287.6 576.9 291.8 C588.8 296.0 581.0 295.9 581.8 296.7" fill="none" stroke="#b3b09e" stroke-width="3" />
<polyline points="583.1,301 597.2,301" fill="none" stroke="#c9c6b2" stroke-width="2.5" />
<polygon points="615,268.5 618.7,263.6 637.1,246.4 633.4,253.8 619.9,271" fill="#cfccb9" />
<polyline points="556.4,314 576,299.3" fill="none" stroke="#3b3a34" stroke-width="2" />
<polygon points="682.6,229.7 766.2,246.9 820,256 882.6,270 913,280 954,292 959.7,309.5 880,291.5 802.3,275.5 758,268.5 705,260 671,253" fill="#848272" />
<polygon points="678,236 740,248.2 762,252.5 766,265 762,263.5 740,259.2 678,247" fill="#6d6b60" opacity=".85"/>
<polyline points="671,250.5 705,257.5 758,266 802.3,273 880,289" fill="none" stroke="#aaa895" stroke-width="3" />
<polyline points="682.6,229.7 766.2,246.9 820,256 882.6,270 913,280 954,292 998.4,306.5" fill="none" stroke="#e9e6d2" stroke-width="1.5" />
<polyline points="671,254 705,261 758,269.5 802.3,276.5 880,292.5 959.7,310.5" fill="none" stroke="#efecd8" stroke-width="2" />
<polygon points="704,371 760,388 800,402 860,430 912,426 891,447.5 858.4,462.3 801,480.3 760,486 700,494 660,499.5 645,505 625,490 680,464 661,418 671,411.8" fill="#94917f" />
<polygon points="712,329 740,333 780,335 831,334 871,334 904,336 937,342 953,347 962,352 958,361 946.6,358.5 920,352 887.5,343.8 838,343.8 789,348.7 740,342 720,338" fill="#fdfab0" />
<polygon points="634,300 645,296 687.5,308 728.5,319 780,322 838.4,318.5 887.5,318 936.7,324 967.9,333 962,352 953,347 937,342 904,336 871,334 831,334 780,335 740,333 712,329 690,321 636.7,306.7" fill="#3e8a50" />
<polygon points="636.7,306.7 690,321 641.6,400.3 605.6,413.4 587.5,385.6 587.5,370.8 615,330" fill="#93855a" />
<clipPath id="cT1"><polygon points="636.7,306.7 690,321 641.6,400.3 605.6,413.4 587.5,385.6 587.5,370.8 615,330"/></clipPath>
<g clip-path="url(#cT1)"><polyline points="584,369.500 646,399.500" fill="none" stroke="#c4b272" stroke-width="11"/><polyline points="584,370.500 646,400.500" fill="none" stroke="#f3e6a2" stroke-width="4.500"/></g>
<polygon points="690,321 712,328 720,338 672,412.5 664,418.5 641.6,401" fill="#1f4a28" />
<polygon points="712,328 720,338 672,412.5 664,418.5 655,413 665,405 708,337" fill="url(#gSeatEdge)" />
<polygon points="605.6,413 641.6,401 664,418.5 640,462.6" fill="#1f4a28" />
<polygon points="655,412 664,418.5 640,462.6 634,454" fill="#348a4c" />
<polygon points="563.6,401.6 517.7,470 510,480 520,484.5 580.7,489.8 595.7,467.5" fill="#93855a" />
<clipPath id="cT2"><polygon points="563.6,401.6 517.7,470 510,480 520,484.5 580.7,489.8 595.7,467.5"/></clipPath>
<g clip-path="url(#cT2)"><polyline points="525,441 600,462.500" fill="none" stroke="#c4b272" stroke-width="11"/><polyline points="525,442.500 600,464" fill="none" stroke="#f3e6a2" stroke-width="4.500"/></g>
<polygon points="595.7,467.5 580.7,489.8 600.3,494.8 612,477" fill="#1f4a28" />
<polygon points="719.8,448.9 731.4,452.8 734.3,477.9 735.2,489.4 693.8,494.3 698.6,481.7 710,460.5" fill="url(#gSeatBack)" />
<polyline points="716,451 705,466 694,486 690,494" fill="none" stroke="#d9d6c4" stroke-width="2.5" />
<polygon points="734.3,476.9 771.9,483.2 749.7,487.5 736,482" fill="#1f4a28" />
<polygon points="812,306 828.5,309.3 831.8,347 817,352 808.9,361.8 802.3,378.2 800.7,394.6 790.8,393 789.2,360.2 794,335.6 805.6,314.3" fill="url(#gSeatBack)" />
<polyline points="809,309 796,336 791,362 792,392" fill="none" stroke="#d7d4c2" stroke-width="2.5" />
<path d="M817 352 C820.8 349.5 828.9 344.3 831.8 347 C834.7 349.7 834.8 361.6 834.3 368.4 C833.8 375.2 831.1 382.6 828.5 388 C825.9 393.4 823.1 399.7 818.7 401 C814.3 402.3 805.0 399.8 802.3 396 C799.6 392.2 801.2 383.9 802.3 378.2 C803.4 372.5 806.4 366.2 808.9 361.8 C811.4 357.4 813.2 354.5 817 352Z" fill="#fdf3b5" />
<polygon points="831,333 899.8,350.3 895.7,358.5 831.8,338.9" fill="#236a36" />
<polyline points="833,341 894,360" fill="none" stroke="#fffff5" stroke-width="3" />
<circle cx="888.4" cy="350.7" r="3" fill="#b9b6a6"/>
<path d="M838.4 379.8 C846.3 377.0 863.2 380.0 869.5 383 C875.8 386.0 874.8 393.4 876 397.9 C877.2 402.4 877.8 405.6 877 410 C876.2 414.4 874.7 420.6 871 424 C867.3 427.4 860.3 428.9 854.8 430.6 C849.3 432.3 844.6 434.9 838 434 C831.4 433.1 817.7 430.7 815 425 C812.3 419.3 818.1 407.5 822 400 C825.9 392.5 830.5 382.6 838.4 379.8Z" fill="#93855a" />
<polygon points="810.5,417.5 832,424 838,434 837,432.8 833.8,439.3 842,457.4 815.7,444.3 808.4,426.2 808,428" fill="#f6e9a8" />
<polygon points="869.5,383 908.9,399.5 911,403 899.3,427.9 897.7,434.4 887.9,444.3 878,452.5 858.4,450.8 833.8,439.3 835.4,432.8 855.1,429.5 874.8,416.4 877,410 876,397.9" fill="#1f4a28" />
<polygon points="833.8,435.2 858.4,441.8 881.3,441.8 899.3,428.7 897.7,434.4 887.9,444.3 878,453.3 858.4,451.1 833.8,439.3" fill="#3a9a58" />
<polyline points="842,457.4 861.6,454.9 879.7,454.1 891.1,445.9" fill="none" stroke="#fffff5" stroke-width="2" />
<polygon points="785.9,392 789,391 854.7,412.6 856.4,416 853,423.3 784.3,399.5" fill="#216b35" />
<polyline points="785,402 851,426" fill="none" stroke="#fffff5" stroke-width="4" />
<ellipse cx="848.500" cy="461" rx="10" ry="7" fill="#b0ad9c" transform="rotate(-30 848.500 461)"/>
<polygon points="954,292.5 998.4,308 1018,317 1029,334 1039.3,353.8 1042.6,371.8 1037.7,394.8 1024.6,414.4 1020.5,422.6 1000,455.7 979.7,483.6 973,491.8 964.9,504.9 948.5,521.3 923.9,536 891,547.5 842,551.6 794.4,548.4 760,541.5 633.1,507 660,503 760,489.3 801,480.3 858.4,462.3 891,447.5 910.8,427.9 923.9,408.2 930.5,400 966,343 968.9,339 973.8,322.6 968.9,307.9" fill="#6b6b6b" />
<path d="M954 292.5 C958.9 292.5 987.7 303.9 998.4 308 C1009.1 312.1 1012.9 312.7 1018 317 C1023.1 321.3 1025.5 327.9 1029 334 C1032.5 340.1 1037.0 347.5 1039.3 353.8 C1041.6 360.1 1042.9 365.0 1042.6 371.8 C1042.3 378.6 1040.7 387.4 1037.7 394.8 C1034.7 402.2 1037.4 423.1 1024.6 416 C1011.8 408.9 970.0 364.8 960.7 352 C951.4 339.2 966.7 343.9 968.9 339 C971.1 334.1 973.8 327.8 973.8 322.6 C973.8 317.4 972.2 312.9 968.9 307.9 C965.6 302.9 949.1 292.5 954 292.5Z" fill="url(#gGlassTop)" />
<polygon points="990,323 1004,326 1009,352 1003,353" fill="#858585" opacity=".75"/>
<polygon points="633.1,507 660,503 760,489.3 797,482 789,547.5 760,541.5" fill="#777777" />
<polygon points="797,482 830,472 858.4,462.3 891,447.5 910.8,427.9 917,419 976,487 972,493 964.9,504.9 957,514 948.5,521.3 937,529 923.9,536 908,542.5 891,547.5 866,550.5 842,551.6 789,547.5" fill="url(#gGlassSide)" />
<polygon points="942,532 896,503 904,492 920,484 933,486" fill="#bdbdbd" opacity=".85" filter="url(#blur2)"/>
<polygon points="941,530 912,497 924,490" fill="#d0d0d0" opacity=".8" filter="url(#blur2)"/>
<path d="M633 505 C637.5 504.2 638.8 503.5 660 500.5 C681.2 497.5 736.5 490.7 760 487 C783.5 483.3 784.6 482.8 801 478.3 C817.4 473.9 843.4 465.8 858.4 460.3 C873.4 454.8 882.6 451.1 891 445.5 C899.4 439.9 903.8 433.3 909 427 C914.2 420.7 918.5 412.3 922 407.5 C925.5 402.7 928.7 399.6 930 398" fill="none" stroke="#fffff5" stroke-width="5" />
<polyline points="797,482 789,548" fill="none" stroke="#fffff5" stroke-width="7" />
<polyline points="914,420.5 976,487.5" fill="none" stroke="#fffff0" stroke-width="5" />
<polyline points="960.7,352 1024.6,418" fill="none" stroke="#fffff0" stroke-width="4" />
<polyline points="967.5,341 913,429" fill="none" stroke="#fffff0" stroke-width="5" />
<polyline points="962,340 908,428" fill="none" stroke="#b5b29f" stroke-width="3" />
<path d="M954 293 C956.5 295.5 965.6 303.0 968.9 307.9 C972.2 312.8 973.8 317.4 973.8 322.6 C973.8 327.8 970.9 334.3 968.9 339 C966.9 343.7 963.1 349.0 962 351" fill="none" stroke="#efecd8" stroke-width="3" />
<polygon points="946,358 958,347 960,352 950,362" fill="#fffff5"/>
<path d="M1002 313.8 C1009.1 317.9 1034.7 330.8 1044.5 338.4 C1054.3 346.0 1057.4 352.9 1061 359.7 C1064.6 366.5 1065.4 372.8 1065.9 379.4 C1066.4 385.9 1065.9 392.2 1064 399 C1062.1 405.8 1058.7 411.6 1054.4 420.3 C1050.1 429.0 1050.9 430.1 1038 451 C1025.1 471.9 990.5 527.7 977 546 C963.5 564.3 969.1 555.8 956.7 561 C944.3 566.2 911.6 574.7 902.6 577.4" fill="none" stroke="#d9d4bc" stroke-width="6" />
<path d="M1064 358.7 C1066.0 364.1 1068.4 371.8 1068.9 378.4 C1069.4 384.9 1068.9 391.2 1067 398 C1065.1 404.8 1061.7 410.6 1057.4 419.3 C1053.1 428.0 1053.9 429.1 1041 450 C1028.1 470.9 993.5 526.7 980 545 C966.5 563.3 972.1 554.8 959.7 560 C947.3 565.2 902.2 571.0 905.6 576.4 C909.0 581.8 948.5 586.9 980 592.6 C1011.5 598.3 1064.8 606.9 1094.8 610.7 C1124.8 614.5 1139.1 616.2 1160 615.6 C1180.9 615.0 1198.0 611.2 1220 607.4 C1242.0 603.6 1278.6 596.7 1292 592.6 C1305.4 588.5 1298.6 586.9 1300.3 582.8 C1302.0 578.7 1304.5 577.0 1302 568 C1299.5 559.0 1292.4 542.1 1285.6 528.7 C1278.8 515.3 1271.1 500.5 1261 487.7 C1250.9 474.9 1232.2 459.1 1225 452 C1217.8 444.9 1227.7 452.9 1217.5 445 C1207.3 437.1 1181.8 416.4 1164 404.7 C1146.2 392.9 1128.8 384.3 1111 374.5 C1093.2 364.7 1064.8 348.6 1057 346 C1049.2 343.4 1062.0 353.3 1064 358.7Z" fill="url(#gFore)" />
<polyline points="908,574.5 959.7,558.5 980,543.5" fill="none" stroke="#d9d4bc" stroke-width="4" />
<path d="M905.6 577.5 C918.0 580.4 948.5 588.7 980 594.6 C1011.5 600.5 1064.8 609.1 1094.8 613 C1124.8 616.9 1139.1 618.5 1160 618 C1180.9 617.5 1198.0 613.8 1220 610 C1242.0 606.2 1280.0 597.5 1292 595" fill="none" stroke="#e6e1c8" stroke-width="5" />
<path d="M1292 593 C1293.5 591.3 1299.2 587.0 1301 582.8 C1302.8 578.6 1305.4 577.0 1303 568 C1300.6 559.0 1293.4 542.1 1286.6 528.7 C1279.8 515.3 1272.1 500.5 1262 487.7 C1251.9 474.9 1232.0 457.9 1226 452" fill="none" stroke="#dedac3" stroke-width="2.5" />
<polygon points="1000,309.5 1067,335.5 1110,353.5 1140,368.5 1164,384.3 1200,406 1230,428 1257.7,450 1275,466 1296,492 1268,474 1244,456 1225,452 1217.5,445 1164,404.7 1111,374.5 1057,346 1020,328" fill="#f3efda" />
<polyline points="1016,318.5 1062,340 1111,364 1164,394 1205,421 1236,446" fill="none" stroke="#fffff6" stroke-width="5" />
<polyline points="1024,329 1057,344.5 1111,372.5 1164,402.5 1217.5,443 1225,450" fill="none" stroke="#d3cfb8" stroke-width="3" />
<polyline points="1000,310.5 1067,336.5 1110,354.5 1140,369.5 1164,385.3" fill="none" stroke="#ddd9c2" stroke-width="2" />
<polyline points="1257.7,450 1302,491 1351,541.8 1384,581 1414,620 1433,644.6 1447,669" fill="none" stroke="#e9e5cd" stroke-width="2.5" />
<polyline points="1236,446 1250,457 1285.6,496 1318.4,541.8 1344.6,581 1367.5,620" fill="none" stroke="#e6e2ca" stroke-width="2.5" />
<polyline points="1366,627 1405,655 1444,684" fill="none" stroke="#f3eed6" stroke-width="5" />
<path d="M1274 482.8 C1275.9 486.1 1289.6 504.1 1297 515.6 C1304.4 527.1 1313.5 541.8 1318.4 551.6 C1323.3 561.4 1325.5 568.0 1326.6 574.6 C1327.7 581.2 1326.4 586.4 1325 591 C1323.6 595.6 1321.4 599.0 1318.4 602.5 C1315.4 606.0 1312.5 608.9 1307 611.8 C1301.5 614.7 1296.8 616.5 1285.6 620 C1274.4 623.5 1255.1 629.8 1240 633 C1224.9 636.2 1193.3 639.0 1195 639.5 C1196.7 640.0 1232.5 637.3 1250 636 C1267.5 634.7 1282.7 632.7 1300 631.5 C1317.3 630.3 1343.7 630.8 1354 629 C1364.3 627.2 1363.6 629.0 1362 621 C1360.4 613.0 1351.9 594.2 1344.6 581 C1337.3 567.8 1328.2 556.0 1318.4 541.8 C1308.6 527.6 1293.0 505.8 1285.6 496 C1278.2 486.2 1272.1 479.5 1274 482.8Z" fill="#aaa796" />
<polygon points="1140.7,481.1 1219.3,512.2 1180,574.5 1099.7,538.5" fill="#fffff2" stroke="#fffff2" stroke-width="14" stroke-linejoin="round" transform="translate(1160 525) scale(.9) translate(-1160 -525)"/>
<polygon points="1140.7,474.6 1219.3,505.7 1180,568 1099.7,532" fill="#424242" stroke="#424242" stroke-width="16" stroke-linejoin="round" transform="translate(1160 521) scale(.9) translate(-1160 -521)"/>
<path d="M1103 535 C1109.2 537.8 1127.8 546.6 1140 552 C1152.2 557.4 1168.7 565.2 1176 567.5 C1183.3 569.8 1182.7 566.2 1184 566" fill="none" stroke="#7a7a7a" stroke-width="1.8" />
<polygon points="695.7,182 712,183 725.2,186.2 780,222.3 836,269 833.6,271.8 766.2,246.9 702.3,197.7" fill="#fffff2" />
<polyline points="712,192 775,236 826,266" fill="none" stroke="#d5d2bc" stroke-width="4" />
<polygon points="679.3,184.6 687,182.5 695.7,182 704,190 702.3,197.7 620.3,320 587.5,370.8 558,369 584,320 671,196" fill="#7b796d" />
<polyline points="699.5,194 616.5,318 585.5,366" fill="none" stroke="#ebe8d4" stroke-width="6.5" />
<polyline points="695.5,190 612,316 581,363" fill="none" stroke="#a9a796" stroke-width="3" />
<polyline points="694,187 611,312 580,360" fill="none" stroke="#8d8b7d" stroke-width="4" />
<polygon points="560,362 588,364 587.5,374 558,372" fill="#c9c7b8" />
<polygon points="558,369 587.5,370.8 605.6,413.4 641.6,462.6 663,418 680.3,463.4 662.9,495.2 655,505 631,505 622,490 564.6,402 540,441.3 527,462 516,462 540,398.7" fill="#fffff5" />
<polyline points="564,402.5 517.7,470.5 511,480" fill="none" stroke="#2f8048" stroke-width="2.6" />
<g stroke-width="2.700" stroke-linecap="butt"><line x1="418" y1="930" x2="418" y2="876" stroke="#0000ff"/><line x1="418" y1="930" x2="451" y2="878" stroke="#00e000"/><line x1="418" y1="930" x2="488" y2="956" stroke="#ff0000"/></g>
<polygon points="413.5,877 418,871 422.5,877 422,882 414,882" fill="#1a1ad0"/><polygon points="447,877 455,874 454.5,882 449,883" fill="#16c816"/><polygon points="484,951 492,957.5 483,960" fill="#e01818"/>
<g font-family="Liberation Sans,sans-serif" font-size="21" fill="none" stroke-width=".9"><text x="418" y="869" stroke="#1c1cff" textLength="15" lengthAdjust="spacingAndGlyphs">Z</text><text x="455.500" y="870" stroke="#10e010" textLength="17.500" lengthAdjust="spacingAndGlyphs">Y</text><text x="496" y="959.500" stroke="#ff1010" textLength="17" lengthAdjust="spacingAndGlyphs">X</text></g></svg>
</div>
</body></html>
